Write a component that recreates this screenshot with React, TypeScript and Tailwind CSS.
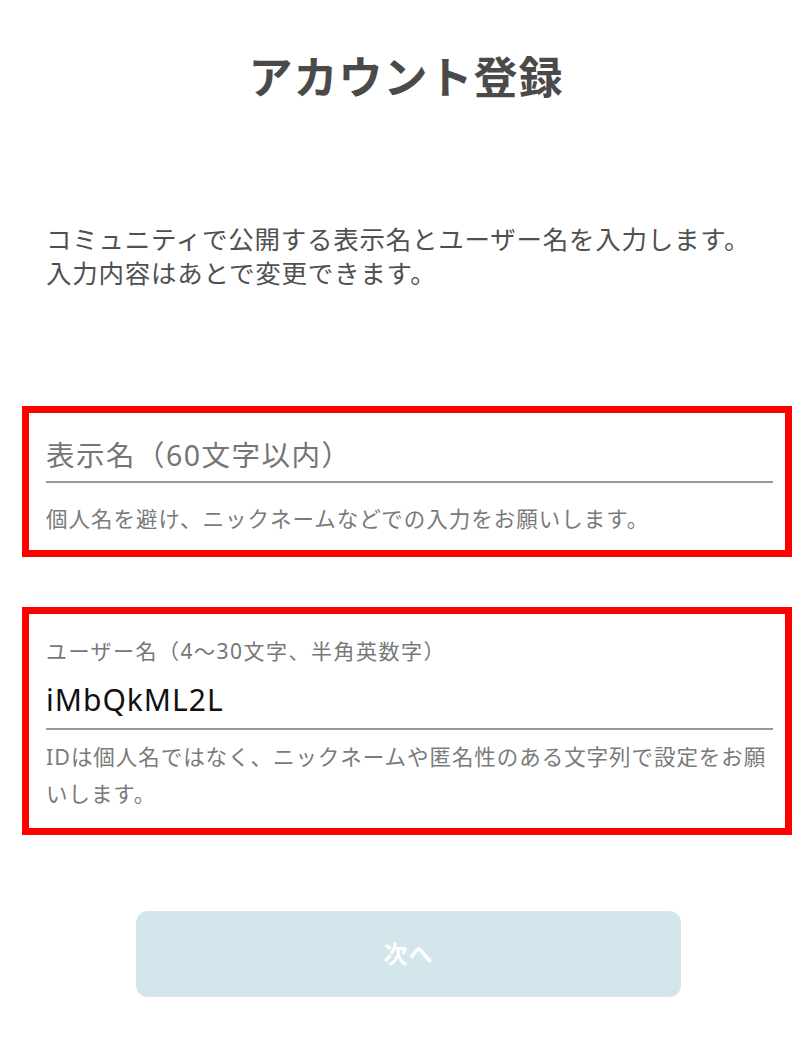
import React from "react";

export default function App() {
  return (
    <div
      className="min-h-[1051px] w-full bg-white flex flex-col"
      style={{ fontFamily: '"Noto Sans", "Noto Sans CJK JP", sans-serif' }}
    >
      <h1 className="mt-[55px] text-center text-[44px] leading-[44px] font-bold tracking-[1px] text-[#4a4a4a]">
        アカウント登録
      </h1>

      <p className="mt-[123px] ml-[46px] text-[25.5px] leading-[34px] tracking-[0.75px] text-[#505050]">
        コミュニティで公開する表示名とユーザー名を入力します。
        <br />
        入力内容はあとで変更できます。
      </p>

      <div className="mt-[116px] ml-[22px] w-[770px] border-[7px] border-[#ff0000] pl-[17px] pr-[12px] pt-[22px] pb-[15px]">
        <div className="border-b-2 border-[#999999] pb-[6px]">
          <input
            className="block w-full h-[40px] bg-transparent outline-none text-[28.5px] leading-[40px] tracking-[1.5px] text-[#111] placeholder:text-[#757575]"
            placeholder="表示名（60文字以内）"
          />
        </div>
        <p className="mt-[20px] text-[21.5px] leading-[32px] tracking-[1px] text-[#7a7a7a]">
          個人名を避け、ニックネームなどでの入力をお願いします。
        </p>
      </div>

      <div className="mt-[50px] ml-[22px] w-[770px] border-[7px] border-[#ff0000] pl-[17px] pr-[12px] pt-[22px] pb-[16px]">
        <label className="block text-[21px] leading-[30px] tracking-[1.5px] text-[#777777]">
          ユーザー名（4〜30文字、半角英数字）
        </label>
        <div className="mt-[14px] border-b-2 border-[#999999] pb-[8px]">
          <input
            className="block w-full h-[40px] bg-transparent outline-none text-[30px] leading-[40px] tracking-[1px] text-[#111111]"
            defaultValue="iMbQkML2L"
          />
        </div>
        <p className="mt-[8px] text-[21.5px] leading-[37px] tracking-[0.95px] text-[#7a7a7a] whitespace-nowrap">
          IDは個人名ではなく、ニックネームや匿名性のある文字列で設定をお願
          <br />
          いします。
        </p>
      </div>

      <button
        type="button"
        className="mt-[76px] ml-[136px] w-[545px] h-[86px] rounded-[12px] bg-[#d2e6eb] text-white text-[24px] font-bold tracking-[1px]"
      >
        次へ
      </button>
    </div>
  );
}
